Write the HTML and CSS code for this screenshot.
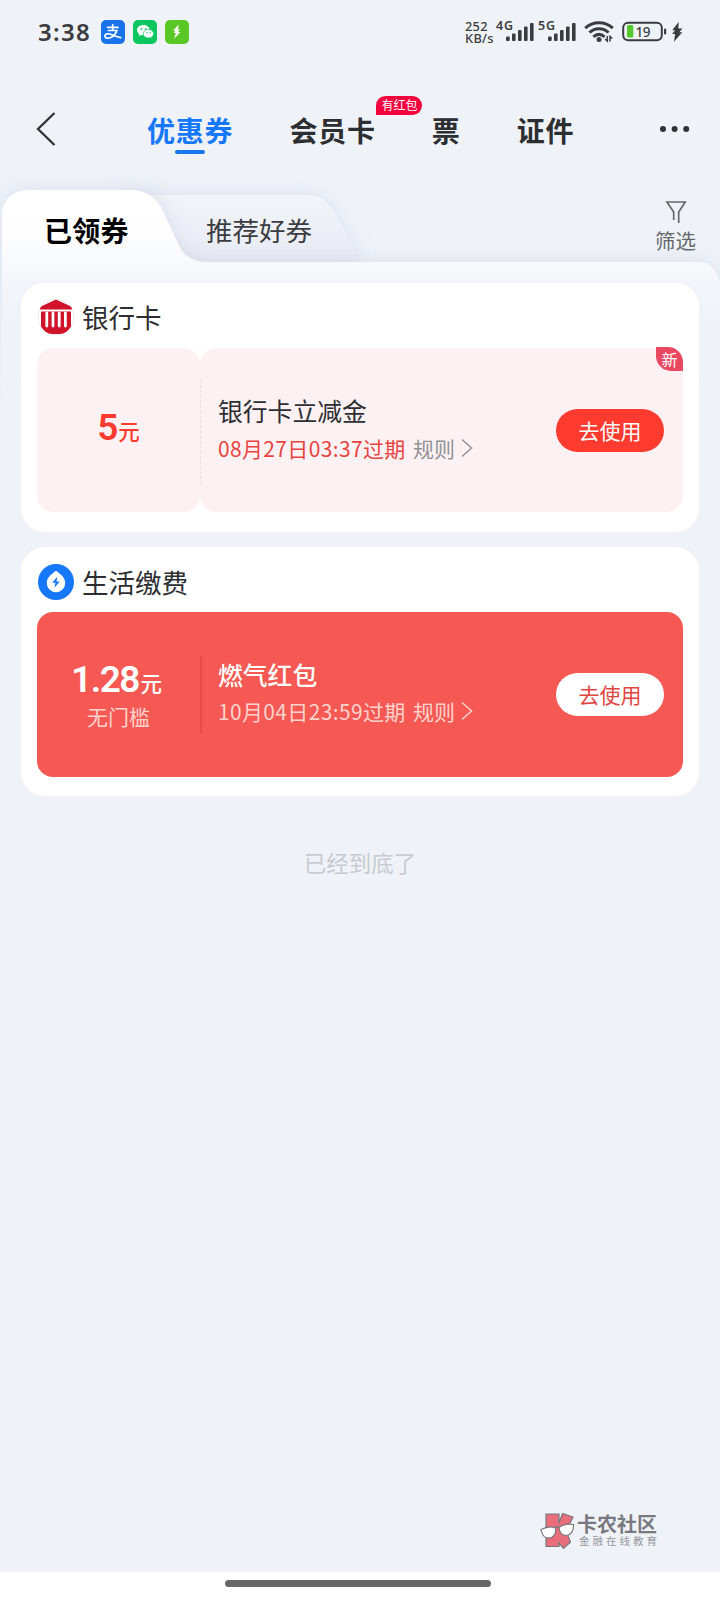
FILE: index.html
```html
<!DOCTYPE html>
<html lang="zh-CN">
<head>
<meta charset="utf-8">
<title>优惠券</title>
<link rel="stylesheet" href="styles.css">
</head>
<body>
<div class="screen">
  <header class="status">
    <span class="clock">3:38</span>
    <span class="app app-pay"><svg width="24" height="24" viewBox="0 0 24 24" fill="none" stroke="#fff" stroke-width="1.700" stroke-linecap="round"><path d="M6.500 7.300h10.500M11.700 4.700v5.800M7.500 10.500h8.300c-.9 3.200-3.600 6-6.600 7.200-3.200 1.100-5.300-.1-5.300-1.800 0-1.800 2.300-2.500 4.800-1.900 3.200.8 5.600 2.600 11 3.600"/></svg></span>
    <span class="app app-chat"><svg width="24" height="24" viewBox="0 0 24 24"><path fill="#fff" d="M10.500 5C6.800 5 4 7.300 4 10.100c0 1.600.9 3 2.400 4l-.6 2 2.300-1.200c.7.200 1.500.3 2.200.3-.8-3.600 2.500-6.100 6.400-6C16 6.800 13.600 5 10.500 5z"/><path fill="#fff" stroke="#0cc75f" stroke-width=".6" d="M15.500 9.500c-3 0-5.200 1.900-5.200 4.200s2.200 4.200 5.200 4.200c.6 0 1.200-.1 1.800-.3l1.800 1-.5-1.700c1.300-.8 2-2 2-3.200 0-2.300-2.200-4.200-5.100-4.200z"/><g fill="#0cc75f"><circle cx="8.300" cy="8.800" r=".9"/><circle cx="12.600" cy="8.800" r=".9"/><circle cx="13.800" cy="12.600" r=".7"/><circle cx="17.300" cy="12.600" r=".7"/></g></svg></span>
    <span class="app app-power"><svg width="24" height="24" viewBox="0 0 24 24"><path fill="#fff" d="M13.800 4.500 8 10.500h2.600L8.500 13h2.400l-2 6L15.500 12h-2.700l2.500-2.500H13z"/></svg></span>
    <span class="speed"><span>252</span><span>KB/s</span></span>
    <svg class="signals" width="82" height="24" viewBox="0 0 82 24" fill="#3b3c40">
      <text x="0" y="10" class="net" textLength="17">4G</text>
      <g id="bars"><rect x="10" y="16.500" width="3.700" height="4.500" rx="1"/><rect x="16" y="13.500" width="3.600" height="7.500" rx="1"/><rect x="22" y="10" width="3.600" height="11" rx="1"/><rect x="28" y="6.500" width="3.600" height="14.500" rx="1"/><rect x="34" y="3" width="3.600" height="18" rx="1"/></g>
      <text x="42" y="10" class="net" textLength="17">5G</text>
      <use href="#bars" x="42"/>
    </svg>
    <svg class="wifi" width="30" height="24" viewBox="0 0 30 24" fill="none" stroke="#3b3c40" stroke-width="3"><path d="M1.200 8.200C9 .9 21 .9 28.800 8.200M5.400 12.500c5.500-5.100 13.700-5.100 19.200 0M9.400 16.800c3.500-3.100 7.700-3.100 11.200 0"/><circle cx="15" cy="19.500" r="2.500" fill="#3b3c40" stroke="none"/><path stroke-width="1.500" d="M23.300 16v5l-2.300-2M26 21.500v-5l2.300 2"/></svg>
    <svg class="battery" width="62" height="24" viewBox="0 0 62 24"><rect x="1.200" y="2.700" width="38.600" height="17.600" rx="5" fill="none" stroke="#3b3c40" stroke-width="2"/><rect x="5" y="5" width="6.300" height="12.500" rx="1.500" fill="#55c82b"/><rect x="42" y="8.500" width="2.200" height="6" rx="1" fill="#3b3c40"/><text x="13.500" y="16.500" class="level" textLength="15">19</text><path fill="#3b3c40" d="m56.700 2-6.500 8.300h2.900l-3 3.700h3L52 21.800l8.300-9.500h-3l3.200-3.800h-4.200z"/></svg>
  </header>

  <nav class="nav">
    <svg class="back" width="20" height="36" viewBox="0 0 20 36" fill="none" stroke="#303236" stroke-width="2.300"><path d="M18.500 2 2 18l16.500 16"/></svg>
    <a class="link link-on">优惠券</a>
    <a class="link">会员卡<span class="tip">有红包</span></a>
    <a class="link">票</a>
    <a class="link">证件</a>
    <svg class="more" width="32" height="8" viewBox="0 0 32 8" fill="#303236"><circle cx="4" cy="4" r="3"/><circle cx="15.600" cy="4" r="3"/><circle cx="27.200" cy="4" r="3"/></svg>
  </nav>

  <section class="tabs">
    <svg class="tabs-shape" width="720" height="240" viewBox="0 0 720 240">
      <defs>
        <linearGradient id="front" gradientUnits="userSpaceOnUse" x1="0" y1="20" x2="0" y2="240"><stop offset="0" stop-color="#fff"/><stop offset=".2" stop-color="#fefeff"/><stop offset=".42" stop-color="#f3f5fa"/><stop offset=".6" stop-color="#eff3f8"/><stop offset="1" stop-color="#eff3f8"/></linearGradient>
        <linearGradient id="rear" x1="0" y1="0" x2="0" y2="1"><stop offset="0" stop-color="#f1f4f8"/><stop offset="1" stop-color="#e8ebf4"/></linearGradient>
        <linearGradient id="fade" x1="0" y1="0" x2="0" y2="1"><stop offset="0" stop-color="#fff"/><stop offset=".5" stop-color="#fff"/><stop offset="1" stop-color="#000"/></linearGradient>
        <mask id="fadeout" maskUnits="userSpaceOnUse" x="0" y="-40" width="720" height="280"><rect x="0" y="-40" width="720" height="280" fill="url(#fade)"/></mask>
        <filter id="shade" x="-10%" y="-25%" width="120%" height="140%"><feDropShadow dx="0" dy="-1" stdDeviation="9" flood-color="#aeb4d2" flood-opacity=".3"/></filter>
      </defs>
      <path fill="url(#rear)" filter="url(#shade)" d="M120 25H305c16 0 23 6 30 18l25 48H120z"/>
      <g mask="url(#fadeout)"><path fill="url(#front)" filter="url(#shade)" d="M2 300V46C2 30 13 20 29 20H130c17 0 27 8 33 21l16 35c5 10 14 16 27 16H699c12 0 18 9 21 20v188z"/></g>
    </svg>
    <span class="tab tab-on">已领券</span>
    <span class="tab tab-off">推荐好券</span>
    <span class="filter"><svg width="22" height="24" viewBox="0 0 22 24" fill="none" stroke="#65676c" stroke-width="1.700"><path d="M8.700 20v-8L2 2h18.200l-6.500 10v11"/></svg>筛选</span>
  </section>

  <main class="list">
    <article class="card">
      <h2 class="title"><svg width="38" height="38" viewBox="0 0 38 38"><circle cx="19" cy="19" r="17.700" fill="#fff" stroke="#eee3e5" stroke-width=".8"/><path fill="#d0132b" d="M19 1.500 33 8q1.800 1 2.300 3.500H2.700Q3.200 9 5 8zM4 13.500h30V28.500C31.500 33 27 36 23 36h-8c-4 0-8.500-3-11-7.500z"/><path fill="none" stroke="#fff" stroke-width="2.800" stroke-linecap="round" d="M9.800 15v13M16 15v13M22.200 15v13M28.400 15v13"/></svg>银行卡</h2>
      <div class="coupon coupon-soft">
        <div class="worth"><p class="amount amount-five"><b>5</b>元</p></div>
        <div class="detail">
          <div class="info"><h3 class="name">银行卡立减金</h3><p class="meta"><span class="expiry">08月27日03:37过期</span><span class="rule">规则</span><svg width="12" height="20" viewBox="0 0 12 20" fill="none" stroke="currentColor" stroke-width="1.500"><path d="m1 1.500 9.500 8.500L1 18.500"/></svg></p></div>
          <button class="use">去使用</button>
        </div>
        <span class="fresh">新</span>
      </div>
    </article>

    <article class="card">
      <h2 class="title title-bill"><svg width="38" height="38" viewBox="0 0 38 38"><circle cx="19" cy="19" r="18" fill="#1677ff"/><path fill="#fff" d="M19 8c1.200 0 2 1.200 3.200 2.200C25.500 12.700 28.200 15.500 28.200 20a9.200 9.200 0 0 1-18.400 0c0-4.500 2.700-7.300 6-9.800C17 9.200 17.800 8 19 8z"/><path fill="#1677ff" d="m20.500 13.500-5.300 6.300h3.200l-.9 5 5.300-6.400h-3.300z"/></svg>生活缴费</h2>
      <div class="coupon coupon-red">
        <div class="worth"><p class="amount"><b>1.28</b>元</p><p class="limit">无门槛</p></div>
        <div class="detail">
          <div class="info"><h3 class="name">燃气红包</h3><p class="meta"><span class="expiry">10月04日23:59过期</span><span class="rule">规则</span><svg width="12" height="20" viewBox="0 0 12 20" fill="none" stroke="currentColor" stroke-width="1.500"><path d="m1 1.500 9.500 8.500L1 18.500"/></svg></p></div>
          <button class="use">去使用</button>
        </div>
      </div>
    </article>
    <p class="end">已经到底了</p>
  </main>

  <footer class="bottom">
    <div class="brand">
      <svg width="36" height="38" viewBox="0 0 36 38"><path fill="#e86e7c" stroke="#77777d" stroke-width="1.200" d="M6 2H19v9L22.500 1.500 33 5l-7 14 4.500 11-7 6.500L19 31v3.500H6z"/><path fill="#fff" stroke="#77777d" stroke-width="1.200" d="M1 17.500c4-2 9-3.500 14-2 2 5-1 10-6 10.500C4 26.500 2 23 1 17.500zM19 15.500c4-3 9-4 14.500-3 .5 6-2.500 10.500-7 11-4 0-7-3-7.500-8z"/><path fill="none" stroke="#77777d" stroke-width="1.500" d="M15 16q2-2 4-1"/></svg>
      <p class="brand-text"><strong>卡农社区</strong><span>金融在线教育</span></p>
    </div>
    <div class="homebar"><i class="pill"></i></div>
  </footer>
</div>
</body>
</html>
```
FILE: styles.css
```css
* { box-sizing: border-box; margin: 0; padding: 0; }
body { font-family: "Noto Sans CJK SC", sans-serif; color: #2d2e31; background: #eff3f8; }
.screen { width: 720px; height: 1600px; display: flex; flex-direction: column; background: #eff3f8; overflow: hidden; }
svg { display: block; flex: none; }

/* status bar */
.status { display: flex; align-items: flex-start; height: 84px; padding: 20px 0 0 38px; }
.clock { width: 63px; font: 600 24px/23px "Noto Sans", sans-serif; letter-spacing: 1.300px; color: #3b3c40; }
.app { width: 24px; height: 24px; margin-right: 8px; border-radius: 5px; }
.app-pay { background: #1973ea; }
.app-chat { background: #0cc75f; }
.app-power { background: #5ac824; }
.speed { display: flex; flex-direction: column; width: 31px; margin-left: 268px; font: 500 12.800px/12px "Noto Sans", sans-serif; letter-spacing: .3px; color: #3b3c40; }
.signals { overflow: visible; }
.net { font: 600 12.500px "Noto Sans", sans-serif; }
.wifi { margin-left: 6px; }
.battery { margin-left: 8px; }
.level { font: 500 13.500px "Noto Sans", sans-serif; fill: #3b3c40; }

/* top navigation */
.nav { display: flex; height: 86px; padding-left: 36px; }
.back { margin-top: 27px; }
.link { position: relative; margin-left: 56px; height: 90px; font-size: 28px; font-weight: 700; line-height: 92px; letter-spacing: .8px; }
.link-on { margin-left: 91px; color: #1677ff; }
.link-on::after { content: ""; position: absolute; left: 28px; top: 66px; width: 30px; height: 4px; border-radius: 2px; background: #1976ec; }
.tip { position: absolute; left: 87px; top: 12px; width: 46px; height: 19px; border-radius: 10px 10px 10px 0; background: #f5003f; color: #fff; font-size: 12px; font-weight: 400; line-height: 18px; letter-spacing: 0; text-align: center; }
.more { margin: 41px 0 0 85px; }

/* folder tabs */
.tabs { position: relative; display: flex; height: 113px; }
.tabs-shape { position: absolute; left: 0; top: 0; overflow: visible; }
.tab { position: relative; white-space: nowrap; }
.tab-on { width: 162px; padding-left: 44px; color: #000; font-size: 28px; font-weight: 700; line-height: 121px; letter-spacing: .3px; }
.tab-off { width: 493px; padding-left: 44px; color: #3b3c40; font-size: 26.500px; line-height: 120px; }
.filter { position: relative; padding-top: 30px; color: #65676c; font-size: 20.500px; line-height: 32px; white-space: nowrap; }
.filter svg { margin-left: 10px; }

/* coupon cards */
.list { position: relative; flex: 1; padding: 0 21px; }
.card { height: 249px; margin-bottom: 15px; padding: 15px 16px 20px; border-radius: 24px; background: #fff; }
.title { display: flex; gap: 7px; height: 50px; font-size: 26.500px; font-weight: 400; line-height: 38px; }
.title-bill svg { margin-top: 1px; }
.title-bill { line-height: 39px; }
.coupon { position: relative; display: flex; height: 164px; }
.worth { display: flex; flex-direction: column; justify-content: center; align-items: center; width: 163px; border-radius: 16px; }
.detail { flex: 1; display: flex; align-items: center; justify-content: space-between; padding: 0 19px 0 18px; border-radius: 16px; }
.coupon-soft .worth, .coupon-soft .detail { background: #fdf1f3; }
.coupon-soft::before { content: ""; position: absolute; left: 163px; top: 32px; height: 104px; border-left: 1px dashed #f6d9dd; }
.coupon-red { height: 165px; border-radius: 16px; background: #f65953; color: #fff; }
.coupon-red::before { content: ""; position: absolute; left: 163px; top: 44px; width: 2px; height: 77px; background: #e74b48; }
.amount { display: flex; align-items: baseline; height: 42px; font-size: 21.500px; font-weight: 500; line-height: 42px; }
.amount b { font: 600 37px/42px Roboto, "Noto Sans", sans-serif; letter-spacing: -1.500px; margin-right: 1.500px; }
.amount-five { margin-top: -5px; color: #ff3b30; }
.limit { height: 32px; margin-top: -1px; font-size: 21px; line-height: 32px; color: #ffd2cc; }
.coupon-red .worth { padding: 2px 4px 0 0; }
.coupon-red .limit { padding-left: 4px; }
.name { font-size: 24.800px; font-weight: 500; line-height: 38px; }
.coupon-soft .info { margin-top: -3px; }
.coupon-soft .name { font-weight: 400; }
.meta { display: flex; align-items: center; font-size: 21px; line-height: 38px; white-space: nowrap; }
.coupon-red .info { margin-top: -4px; }
.expiry { width: 195px; letter-spacing: .35px; }
.rule { width: 48px; }
.coupon-soft .expiry { color: #e84440; }
.coupon-soft .meta { color: #929296; }
.coupon-red .meta { margin-top: -1px; color: #ffd2cc; }
.use { width: 108px; height: 43px; border: 0; border-radius: 22px; font: 400 21px/41px "Noto Sans CJK SC", sans-serif; background: #ff3a2f; color: #fff; }
.coupon-red .use { background: #fff; color: #df453e; }
.fresh { position: absolute; right: 0; top: -1px; width: 27px; height: 24px; border-radius: 0 15px 0 15px; background: #e94861; color: #fff; font-size: 16px; line-height: 24px; text-align: center; }
.end { margin-top: 50px; font-size: 22.500px; line-height: 32px; text-align: center; color: #c8cbd0; }

/* bottom edge */
.brand { display: flex; align-items: center; gap: 1px; height: 62px; padding: 0 0 21px 540px; }
.brand-text { display: flex; flex-direction: column; }
.brand-text strong { font-size: 20px; font-weight: 700; line-height: 20px; color: #78797e; }
.brand-text span { padding-left: 2px; font-size: 10.500px; line-height: 14px; letter-spacing: 3px; color: #96979d; white-space: nowrap; }
.homebar { display: flex; justify-content: center; height: 28px; padding: 8px 4px 0 0; background: #fff; }
.pill { width: 266px; height: 7px; border-radius: 4px; background: #66676a; }
```
